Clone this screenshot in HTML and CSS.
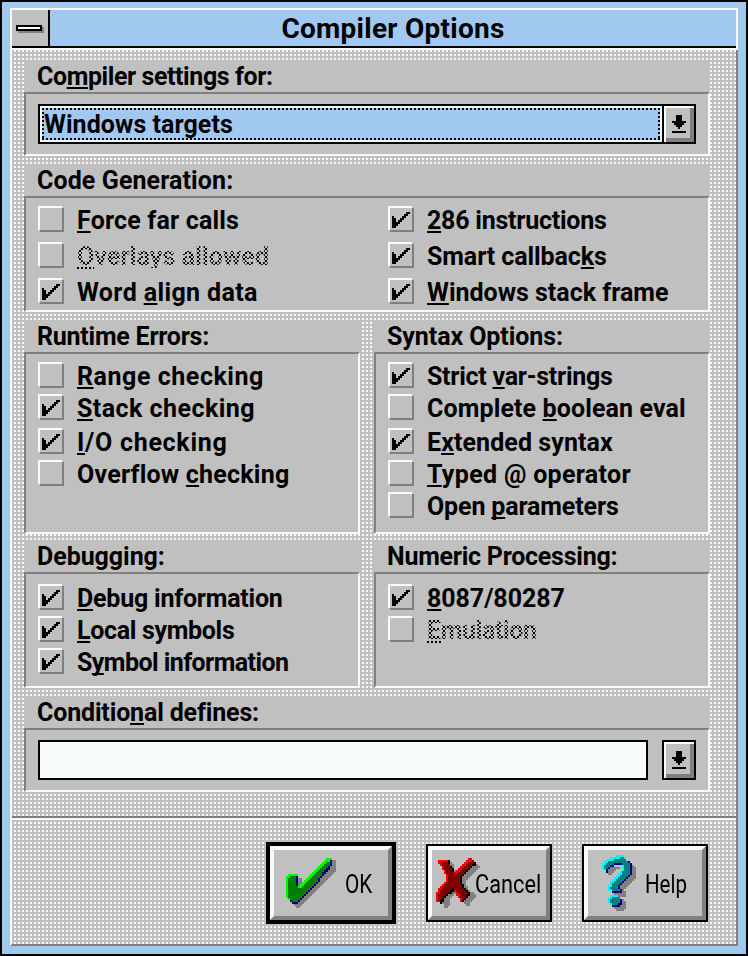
FILE: index.html
```
<!DOCTYPE html>
<html lang="en">
<head>
<meta charset="utf-8">
<title>Compiler Options</title>
<link rel="stylesheet" href="styles.css">
</head>
<body>
<svg class="defs" width="0" height="0" aria-hidden="true">
  <symbol id="tick" viewBox="0 0 13 13"><path d="M9 3.5h2M8 4.5h2M2 5.5h1M7 5.5h2M2 6.5h2M6 6.5h2M2 7.5h2M5 7.5h2M2 8.5h4M2 9.5h3M2 10.5h2"/></symbol>
  <symbol id="down" viewBox="0 0 7 9"><path d="M2 .5h3M2 1.5h3M2 2.5h3M0 3.5h7M1 4.5h5M2 5.5h3M3 6.5h1M0 8.5h7"/></symbol>
</svg>
<div class="window">
  <header class="titlebar">
    <button class="sysmenu" aria-label="System menu"><span class="bar"></span></button>
    <h1>Compiler Options</h1>
  </header>
  <main class="client">
    <section class="group">
      <h2 style="--ls:-.42px">Co<u>m</u>piler settings for:</h2>
      <div class="body field-row">
        <div class="combo">
          <div class="value" style="--ls:.06px"><span>Windows targets</span></div>
          <button class="drop" aria-label="Open list"><svg><use href="#down"/></svg></button>
        </div>
      </div>
    </section>

    <section class="group codegen">
      <h2 style="--ls:.1px">Code Generation:</h2>
      <div class="body columns">
        <div class="checks">
          <label style="--ls:.18px"><i class="box"></i><span><u>F</u>orce far calls</span></label>
          <label class="disabled" style="--ls:.1px"><i class="box"></i><span><u>O</u>verlays allowed</span></label>
          <label style="--ls:.37px"><i class="box"><svg><use href="#tick"/></svg></i><span>Word <u>a</u>lign data</span></label>
        </div>
        <div class="checks">
          <label style="--ls:-.24px"><i class="box"><svg><use href="#tick"/></svg></i><span><u>2</u>86 instructions</span></label>
          <label style="--ls:-.09px"><i class="box"><svg><use href="#tick"/></svg></i><span>Smart callbac<u>k</u>s</span></label>
          <label style="--ls:-.01px"><i class="box"><svg><use href="#tick"/></svg></i><span><u>W</u>indows stack frame</span></label>
        </div>
      </div>
    </section>

    <div class="pair options">
      <section class="group">
        <h2 style="--ls:-.24px">Runtime Errors:</h2>
        <div class="body checks">
          <label style="--ls:.55px"><i class="box"></i><span><u>R</u>ange checking</span></label>
          <label style="--ls:.45px"><i class="box"><svg><use href="#tick"/></svg></i><span><u>S</u>tack checking</span></label>
          <label style="--ls:.72px"><i class="box"><svg><use href="#tick"/></svg></i><span><u>I</u>/O checking</span></label>
          <label style="--ls:.22px"><i class="box"></i><span>Overflow <u>c</u>hecking</span></label>
        </div>
      </section>
      <section class="group">
        <h2 style="--ls:-.08px">Syntax Options:</h2>
        <div class="body checks">
          <label style="--ls:-.27px"><i class="box"><svg><use href="#tick"/></svg></i><span>Strict <u>v</u>ar-strings</span></label>
          <label style="--ls:.12px"><i class="box"></i><span>Complete <u>b</u>oolean eval</span></label>
          <label style="--ls:.08px"><i class="box"><svg><use href="#tick"/></svg></i><span>E<u>x</u>tended syntax</span></label>
          <label style="--ls:.32px"><i class="box"></i><span><u>T</u>yped @ operator</span></label>
          <label style="--ls:-.14px"><i class="box"></i><span>Open <u>p</u>arameters</span></label>
        </div>
      </section>
    </div>

    <div class="pair debug">
      <section class="group">
        <h2 style="--ls:-.05px">Debugging:</h2>
        <div class="body checks">
          <label style="--ls:-.22px"><i class="box"><svg><use href="#tick"/></svg></i><span><u>D</u>ebug information</span></label>
          <label style="--ls:-.32px"><i class="box"><svg><use href="#tick"/></svg></i><span><u>L</u>ocal symbols</span></label>
          <label style="--ls:-.57px"><i class="box"><svg><use href="#tick"/></svg></i><span>S<u>y</u>mbol information</span></label>
        </div>
      </section>
      <section class="group">
        <h2 style="--ls:-.25px">Numeric Processing:</h2>
        <div class="body checks">
          <label style="--ls:-.06px"><i class="box"><svg><use href="#tick"/></svg></i><span><u>8</u>087/80287</span></label>
          <label class="disabled" style="--ls:-.36px"><i class="box"></i><span><u>E</u>mulation</span></label>
        </div>
      </section>
    </div>

    <section class="group">
      <h2 style="--ls:-.16px">Conditio<u>n</u>al defines:</h2>
      <div class="body field-row">
        <div class="defines">
          <div class="input"></div>
          <button class="drop" aria-label="Show history"><svg><use href="#down"/></svg></button>
        </div>
      </div>
    </section>

    <hr>

    <footer class="actions">
      <button class="action default">
        <svg class="icon" viewBox="15 14 25 25">
          <path class="shade" d="M38 15.5h2M38 16.5h2M38 17.5h2M37 18.5h3M37 19.5h3M36 20.5h4M35 21.5h4M34 22.5h4M33 23.5h4M21 24.5h2M32 24.5h4M21 25.5h2M32 25.5h3M21 26.5h2M31 26.5h3M21 27.5h1M30 27.5h3M29 28.5h3M28 29.5h3M27 30.5h3M26 31.5h3M25 32.5h3M24 33.5h3M23 34.5h3M22 35.5h3M21 36.5h3M19 37.5h4M20 38.5h2"/>
          <path class="navy" d="M37 15.5h1M37 16.5h1M37 17.5h1M36 18.5h1M35 19.5h2M34 20.5h2M33 21.5h2M33 22.5h1M20 23.5h1M32 23.5h1M20 24.5h1M31 24.5h1M20 25.5h1M31 25.5h1M20 26.5h1M30 26.5h1M20 27.5h1M29 27.5h1M28 28.5h1M27 29.5h1M26 30.5h1M25 31.5h1M24 32.5h1M23 33.5h1M22 34.5h1M17 35.5h1M21 35.5h1M18 36.5h3"/>
          <path class="green" d="M36 15.5h1M35 16.5h2M34 17.5h3M33 18.5h3M32 19.5h3M31 20.5h3M30 21.5h3M29 22.5h4M17 23.5h3M28 23.5h4M16 24.5h4M27 24.5h4M16 25.5h4M26 25.5h5M16 26.5h4M25 26.5h5M16 27.5h4M24 27.5h5M16 28.5h5M23 28.5h5M16 29.5h11M16 30.5h10M16 31.5h9M16 32.5h8M16 33.5h7M17 34.5h5M18 35.5h3"/>
          <path class="lime" d="M35 14.5h3M34 15.5h3M33 16.5h2M32 17.5h2M31 18.5h2M30 19.5h2M29 20.5h2M28 21.5h2M16 22.5h5M27 22.5h2M15 23.5h2M26 23.5h2M15 24.5h1M25 24.5h2M15 25.5h1M24 25.5h2M15 26.5h1M23 26.5h2M15 27.5h1M22 27.5h2M15 28.5h1M21 28.5h2M15 29.5h1M15 30.5h1M15 31.5h1M15 32.5h1M15 33.5h1M16 34.5h1"/>
        </svg>
        <span>OK</span>
      </button>
      <button class="action cancel">
        <svg class="icon" viewBox="10 14 22 25">
          <path class="shade" d="M17 16.5h1M17 17.5h2M30 17.5h1M18 18.5h1M28 18.5h4M18 19.5h1M27 19.5h4M19 20.5h1M26 20.5h4M25 21.5h4M24 22.5h4M23 23.5h4M23 24.5h3M23 25.5h2M23 26.5h2M24 27.5h1M24 28.5h2M25 29.5h1M19 30.5h1M26 30.5h1M18 31.5h2M27 31.5h2M16 32.5h3M27 32.5h3M15 33.5h3M26 33.5h4M14 34.5h3M25 34.5h4M14 35.5h3M24 35.5h4M13 36.5h4M24 36.5h3M14 37.5h3M25 37.5h2M14 38.5h2"/>
          <path class="black" d="M16 15.5h1M16 16.5h1M29 16.5h1M28 17.5h2M17 18.5h1M27 18.5h1M18 19.5h1M26 19.5h1M18 20.5h1M25 20.5h1M24 21.5h1M23 22.5h1M22 23.5h1M22 24.5h1M22 25.5h1M22 26.5h1M23 27.5h1M23 28.5h1M18 29.5h1M24 29.5h1M17 30.5h2M25 30.5h1M16 31.5h2M26 31.5h1M15 32.5h1M25 32.5h2M14 33.5h1M25 33.5h1M13 34.5h1M24 34.5h1M12 35.5h2M23 35.5h1M12 36.5h1"/>
          <path class="maroon" d="M28 15.5h1M13 16.5h3M26 16.5h3M13 17.5h4M25 17.5h3M14 18.5h3M24 18.5h3M14 19.5h4M23 19.5h3M15 20.5h3M22 20.5h3M15 21.5h4M21 21.5h3M16 22.5h7M16 23.5h6M16 24.5h6M16 25.5h6M15 26.5h7M14 27.5h9M13 28.5h10M13 29.5h5M19 29.5h5M12 30.5h5M20 30.5h5M12 31.5h4M21 31.5h5M11 32.5h4M22 32.5h3M11 33.5h3M22 33.5h3M11 34.5h2M23 34.5h1"/>
          <path class="red" d="M26 14.5h2M13 15.5h3M11 15.5h2M25 15.5h3M11 16.5h2M24 16.5h2M12 17.5h1M23 17.5h2M13 18.5h1M22 18.5h2M13 19.5h1M21 19.5h2M14 20.5h1M20 20.5h2M14 21.5h1M19 21.5h2M15 22.5h1M15 23.5h1M15 24.5h1M15 25.5h1M14 26.5h1M13 27.5h1M12 28.5h1M11 29.5h2M11 30.5h1M19 30.5h1M10 31.5h2M20 31.5h1M10 32.5h1M20 32.5h2M10 33.5h1M21 33.5h1M10 34.5h1M22 34.5h1M10 35.5h2M22 35.5h1"/>
        </svg>
        <span>Cancel</span>
      </button>
      <button class="action help">
        <svg class="icon" viewBox="16 12 17 28">
          <path class="shade" d="M31 17.5h1M20 18.5h5M31 18.5h2M19 19.5h4M31 19.5h2M19 20.5h3M31 20.5h2M19 21.5h2M31 21.5h2M30 22.5h3M29 23.5h4M28 24.5h4M27 25.5h4M26 26.5h4M25 27.5h4M25 28.5h3M26 29.5h1M26 30.5h2M22 31.5h6M24 32.5h4M26 34.5h1M26 35.5h2M26 36.5h2M25 37.5h3M22 38.5h6M23 39.5h4"/>
          <path class="navy" d="M29 15.5h1M22 16.5h4M30 16.5h1M20 17.5h2M30 17.5h1M19 18.5h1M30 18.5h1M18 19.5h1M30 19.5h1M18 20.5h1M30 20.5h1M30 21.5h1M29 22.5h1M28 23.5h1M27 24.5h1M26 25.5h1M25 26.5h1M24 27.5h1M24 28.5h1M25 29.5h1M21 30.5h5M25 34.5h1M25 35.5h1M24 36.5h2M21 37.5h4"/>
          <path class="teal" d="M25 13.5h2M22 14.5h6M19 15.5h10M18 16.5h4M26 16.5h4M17 17.5h3M26 17.5h4M17 18.5h2M27 18.5h3M17 19.5h1M27 19.5h3M26 20.5h4M26 21.5h4M25 22.5h4M24 23.5h4M23 24.5h4M22 25.5h4M21 26.5h4M21 27.5h3M20 28.5h4M21 29.5h4M21 33.5h4M20 34.5h5M20 35.5h5M21 36.5h3"/>
          <path class="cyan" d="M23 12.5h4M20 13.5h5M27 13.5h1M18 14.5h4M17 15.5h2M16 16.5h2M16 17.5h1M26 17.5h1M16 18.5h1M26 18.5h1M17 19.5h1M26 19.5h1M25 20.5h1M24 21.5h2M23 22.5h2M22 23.5h2M21 24.5h2M20 25.5h2M20 26.5h1M19 27.5h2M19 28.5h1M19 29.5h2M20 32.5h4M19 33.5h2M19 34.5h1M19 35.5h1M20 36.5h1"/>
        </svg>
        <span>Help</span>
      </button>
    </footer>
  </main>
</div>
</body>
</html>
```

FILE: styles.css
```
:root {
  --gray: #c0c0c0;
  --dark: #808080;
  --white: #f8fcf8;
  --blue: #a0c8f0;
}

* { box-sizing: border-box; }

body {
  margin: 0;
  background: #000;
  color: #000;
  font: bold 25px/26px Roboto, "Liberation Sans", sans-serif;
}

button {
  margin: 0;
  padding: 0;
  border: 0;
  border-radius: 0;
  color: inherit;
  font: inherit;
}

svg { display: block; shape-rendering: crispEdges; }
svg path { fill: none; stroke: #000; stroke-width: 1; }
.defs { position: absolute; }

.window {
  width: 748px;
  height: 956px;
  border: 2px solid #000;
  padding: 6px 8px 8px;
  background: var(--blue);
  display: flex;
  flex-direction: column;
}

.titlebar {
  height: 42px;
  flex: none;
  display: flex;
  border: 2px solid var(--white);
  background: linear-gradient(#000, #000) 0 100% / 100% 2px no-repeat;
}

.titlebar h1 {
  flex: 1;
  margin: 0;
  font-size: 28px;
  line-height: 38px;
  text-align: center;
  letter-spacing: .25px;
}

.sysmenu {
  width: 38px;
  height: 36px;
  padding: 14px 4px;
  border-right: 2px solid #000;
  background: var(--gray);
}

.sysmenu .bar {
  display: block;
  width: 26px;
  height: 6px;
  border: 2px solid #000;
  background: var(--white);
  box-shadow: 2px 2px 0 var(--dark);
}

.client {
  flex: 1;
  padding: 10px 26px 0 12px;
  border: solid;
  border-width: 0 2px 2px;
  border-color: var(--dark) var(--dark) var(--dark) var(--white);
  background:
    conic-gradient(from 0deg at 2px 2px, var(--gray) 75%, var(--white) 0) 2px 0 / 4px 4px,
    var(--gray);
}

.group {
  display: flex;
  flex-direction: column;
  margin-bottom: 8px;
  background: var(--gray);
}

.group h2 {
  height: 32px;
  margin: 0;
  padding-left: 13px;
  font-size: 25px;
  line-height: 33px;
  letter-spacing: var(--ls);
}

.body {
  flex: 1 0 auto;
  border: 2px solid;
  border-color: var(--dark) var(--white) var(--white) var(--dark);
}

u {
  text-decoration: underline 2px;
  text-underline-offset: 2px;
  text-decoration-skip-ink: none;
}

.field-row { padding: 10px 12px; }
.combo { display: flex; }

.combo .value {
  flex: 1;
  height: 40px;
  padding: 2px;
  border: solid #000;
  border-width: 2px 0 2px 2px;
  background: var(--white);
  letter-spacing: var(--ls);
}

.combo .value span {
  display: block;
  height: 32px;
  padding-left: 2px;
  line-height: 33px;
  background:
    repeating-linear-gradient(90deg, #000 0 2px, transparent 2px 4px) 0 0 / 100% 2px no-repeat,
    repeating-linear-gradient(90deg, #000 0 2px, transparent 2px 4px) 0 100% / 100% 2px no-repeat,
    repeating-linear-gradient(#000 0 2px, transparent 2px 4px) 0 0 / 2px 100% no-repeat,
    repeating-linear-gradient(#000 0 2px, transparent 2px 4px) 100% 0 / 2px 100% no-repeat,
    var(--blue);
}

.drop {
  width: 34px;
  height: 40px;
  padding: 8px;
  border: 2px solid #000;
  background: var(--gray);
  box-shadow: inset 2px 2px 0 var(--white), inset -4px -4px 0 var(--dark);
}

.drop svg { width: 14px; height: 18px; }

.defines { display: flex; justify-content: space-between; }

.defines .input {
  width: 610px;
  height: 40px;
  border: 2px solid #000;
  background: var(--white);
}

.codegen .body { height: 116px; padding: 8px 12px 0; }
.columns { display: grid; grid-template-columns: 350px 1fr; }

.checks { display: flex; flex-direction: column; gap: 10px; }
.body.checks { gap: 6px; padding-left: 12px; }

label {
  display: flex;
  gap: 13px;
  height: 26px;
  letter-spacing: var(--ls);
  white-space: nowrap;
}

.box {
  flex: none;
  width: 26px;
  height: 26px;
  background:
    linear-gradient(var(--white) 0 0) 0 0 / 24px 2px no-repeat,
    linear-gradient(var(--white) 0 0) 0 0 / 2px 24px no-repeat,
    linear-gradient(var(--dark) 0 0) 100% 100% / 24px 2px no-repeat,
    linear-gradient(var(--dark) 0 0) 100% 100% / 2px 24px no-repeat;
}

.box svg { width: 26px; height: 26px; }

label > span { line-height: 29px; }

/* Greyed text is drawn through a 2px checkerboard. */
.disabled > span {
  color: transparent;
  background: repeating-conic-gradient(#000 0 25%, transparent 0 50%) 0 0 / 4px 4px;
  background-clip: text;
  -webkit-background-clip: text;
}

.disabled u {
  text-decoration: none;
  background: repeating-linear-gradient(90deg, #000 0 2px, transparent 2px 4px) 0 25px / 100% 2px no-repeat;
}

.pair {
  display: grid;
  grid-template-columns: 336px 336px;
  column-gap: 14px;
}

.options { height: 214px; margin-bottom: 6px; }
.options .group { margin: 0; }
.options .body { padding-top: 8px; }
.options label:nth-child(3) { margin-top: 2px; }

.debug { height: 148px; margin-bottom: 8px; }
.debug .group { margin: 0; }
.debug .body { padding-top: 10px; }

hr {
  height: 4px;
  margin: 24px -26px 0 -12px;
  border: solid;
  border-width: 2px 0;
  border-color: var(--dark) transparent var(--white);
}

.actions {
  display: flex;
  justify-content: flex-end;
  gap: 26px;
  margin-right: 2px;
  padding-top: 24px;
}

.action {
  display: flex;
  align-items: center;
  width: 122px;
  height: 74px;
  margin: 2px;
  border: 4px solid;
  border-color: var(--white) var(--dark) var(--dark) var(--white);
  box-shadow: 0 0 0 2px #000;
  background: var(--gray);
  font-weight: 400;
}

.action + .action { margin-left: 6px; }
.action.default { box-shadow: 0 0 0 4px #000; margin-right: 4px; }

.action span { flex: none; padding-top: 3px; transform-origin: 0 50%; }
.icon { flex: none; }

.default .icon { width: 50px; height: 50px; margin: 0 9px 0 12px; }
.default span { transform: scaleX(.83); }
.cancel .icon { width: 44px; height: 50px; margin: 0 -5px 0 4px; }
.cancel span { transform: scaleX(.87); }
.help .icon { width: 34px; height: 56px; margin: 0 9px 0 14px; }
.help span { transform: scaleX(.82); }

.shade { stroke: #808080; }
.navy { stroke: #000080; }
.green { stroke: #008000; }
.lime { stroke: #00f800; }
.maroon { stroke: #800000; }
.red { stroke: #f80000; }
.teal { stroke: #008080; }
.cyan { stroke: #00f8f8; }
```
